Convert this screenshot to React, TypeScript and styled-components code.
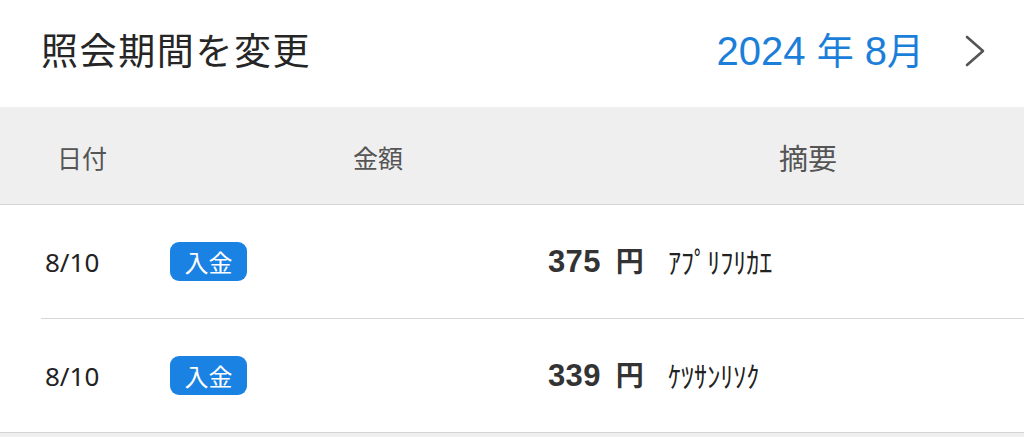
import React from "react";
import styled, { createGlobalStyle } from "styled-components";

const Global = createGlobalStyle`
  html, body { margin: 0; padding: 0; background: #efefef; }
  body { font-family: "Noto Sans CJK JP", "Noto Sans", sans-serif; -webkit-font-smoothing: antialiased; }
`;

const Page = styled.div`
  width: 1024px;
  display: flex;
  flex-direction: column;
`;

const TopBar = styled.div`
  height: 107px;
  background: #fff;
  display: flex;
  align-items: center;
  justify-content: space-between;
  padding: 0 38px 0 41px;
  box-sizing: border-box;
`;

const Title = styled.div`
  font-size: 37px;
  color: #262626;
  letter-spacing: 1.6px;
  line-height: 1;
  margin-top: -8px;
`;

const PeriodPicker = styled.div`
  display: flex;
  align-items: center;
  gap: 40px;
  margin-top: -6px;
`;

const Period = styled.div`
  font-size: 40px;
  color: #1b7fd9;
  line-height: 1;
  font-family: "Liberation Sans", Arial, "Noto Sans CJK JP", sans-serif;
`;

const PeriodKanji = styled.span`
  font-family: "Noto Sans CJK JP", sans-serif;
  font-size: 37px;
`;

const ColumnHeader = styled.div`
  height: 98px;
  background: #efefef;
  border-bottom: 1px solid #d4d4d4;
  box-sizing: border-box;
  display: flex;
  align-items: center;
  padding-left: 57px;
  color: #555;
`;

const HeadCell = styled.div<{ $w?: number; $size?: number }>`
  width: ${(p) => (p.$w ? `${p.$w}px` : "auto")};
  font-size: ${(p) => p.$size ?? 25}px;
  line-height: 1;
  margin-top: 4px;
`;

const List = styled.div`
  background: #fff;
  border-bottom: 1px solid #d4d4d4;
  padding-left: 41px;
`;

const Row = styled.div<{ $last?: boolean }>`
  height: ${(p) => (p.$last ? 113 : 114)}px;
  box-sizing: border-box;
  border-bottom: ${(p) => (p.$last ? "none" : "1px solid #d6d6d6")};
  display: flex;
  align-items: center;
  padding-left: 4px;
`;

const DateCell = styled.div`
  width: 125px;
  font-size: 26px;
  color: #222;
  line-height: 1;
  font-family: "Noto Sans", "Open Sans", sans-serif;
`;

const Badge = styled.div`
  width: 77px;
  height: 39px;
  border-radius: 9px;
  background: #1a82e2;
  color: #fff;
  font-size: 24px;
  display: flex;
  align-items: center;
  justify-content: center;
  line-height: 1;
  box-sizing: border-box;
`;

const Amount = styled.div`
  width: 397px;
  text-align: right;
  font-family: "Liberation Sans", Arial, "Noto Sans CJK JP", sans-serif;
  font-weight: 700;
  font-size: 31px;
  color: #333;
  line-height: 1;
  letter-spacing: 0.3px;
`;

const Yen = styled.span`
  font-family: "Noto Sans CJK JP", sans-serif;
  font-weight: 700;
  font-size: 28px;
  margin-left: 15px;
`;

const Desc = styled.div`
  margin-left: 24px;
  font-size: 29px;
  color: #222;
  line-height: 1;
  transform: scaleX(0.9);
  transform-origin: left center;
`;

const Chevron = () => (
  <svg width="22" height="34" viewBox="0 0 22 34" fill="none">
    <path d="M3 3 L19 17 L3 31" stroke="#555" strokeWidth="2.6" strokeLinecap="round" strokeLinejoin="round" />
  </svg>
);

const rows = [
  { date: "8/10", amount: "375", desc: "ｱﾌﾟﾘﾌﾘｶｴ" },
  { date: "8/10", amount: "339", desc: "ｹﾂｻﾝﾘｿｸ" },
];

export default function App() {
  return (
    <Page>
      <Global />
      <TopBar>
        <Title>照会期間を変更</Title>
        <PeriodPicker>
          <Period>
            2024 <PeriodKanji>年</PeriodKanji> 8<PeriodKanji>月</PeriodKanji>
          </Period>
          <Chevron />
        </PeriodPicker>
      </TopBar>
      <ColumnHeader>
        <HeadCell $w={296}>日付</HeadCell>
        <HeadCell $w={426}>金額</HeadCell>
        <HeadCell $size={29}>摘要</HeadCell>
      </ColumnHeader>
      <List>
        {rows.map((r, i) => (
          <Row key={i} $last={i === rows.length - 1}>
            <DateCell>{r.date}</DateCell>
            <Badge>入金</Badge>
            <Amount>
              {r.amount}
              <Yen>円</Yen>
            </Amount>
            <Desc>{r.desc}</Desc>
          </Row>
        ))}
      </List>
    </Page>
  );
}
